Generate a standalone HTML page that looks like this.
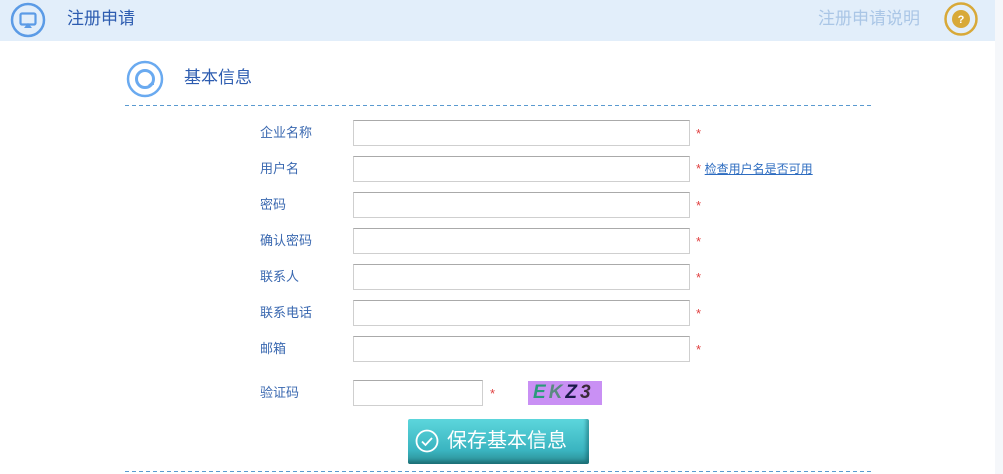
<!DOCTYPE html><html><head><meta charset="utf-8"><style>
body{margin:0;width:1003px;height:474px;background:#fff;font-family:"Liberation Sans","Noto Sans CJK SC",sans-serif;position:relative;overflow:hidden}
.a{position:absolute}
.hdr{left:0;top:0;width:995px;height:41px;background:#e2eefa}
.side{left:995px;top:0;width:8px;height:474px;background:#f5f7fa}
.lbl{left:260px;font-size:13px;color:#3a68b0;line-height:16px}
.in{left:353px;width:335px;height:24px;border:1px solid #cfcfcf;border-top-color:#aaa;background:#fff}
.st{color:#e04040;font-size:13px;line-height:16px}
.dash{left:125px;width:747px;height:1px;background:repeating-linear-gradient(90deg,#5a9ad0 0 4px,transparent 4px 7px)}
</style></head><body>
<div class="a hdr"></div><div class="a side"></div>
<svg class="a" style="left:10px;top:2px" width="36" height="36" viewBox="0 0 36 36"><circle cx="18" cy="18" r="16" fill="none" stroke="#5b9be6" stroke-width="2.5"/><rect x="10.5" y="11.5" width="15" height="11" rx="1.5" fill="none" stroke="#5b9be6" stroke-width="2.2"/><path d="M14 26h8l-4-5z" fill="#5b9be6"/></svg>
<div class="a" style="left:67px;top:8px;font-size:17px;line-height:22px;color:#2d5cb0">注册申请</div>
<div class="a" style="left:818px;top:8px;font-size:17px;line-height:22px;color:#aac6e6">注册申请说明</div>
<svg class="a" style="left:943px;top:1px" width="36" height="36" viewBox="0 0 36 36"><circle cx="18" cy="18" r="15.5" fill="none" stroke="#d8a938" stroke-width="2.5"/><circle cx="18" cy="18" r="9" fill="#d8a938"/><text x="18" y="22" text-anchor="middle" font-size="11" font-weight="bold" fill="#fff" font-family="Liberation Sans">?</text></svg>
<svg class="a" style="left:126px;top:60px" width="38" height="38" viewBox="0 0 38 38"><circle cx="19" cy="19" r="17" fill="none" stroke="#6aaaf0" stroke-width="2.5"/><circle cx="19" cy="19" r="8.5" fill="none" stroke="#6aaaf0" stroke-width="3"/><path d="M22 25h6v-5z" fill="#6aaaf0"/></svg>
<div class="a" style="left:184px;top:67px;font-size:17px;line-height:22px;color:#2d5cb0">基本信息</div>
<div class="a dash" style="top:105px"></div>
<div class="a dash" style="top:471px"></div>
<div class="a lbl" style="top:125px">企业名称</div><div class="a in" style="top:120px"></div><div class="a st" style="left:696px;top:126px">*</div>
<div class="a lbl" style="top:161px">用户名</div><div class="a in" style="top:156px"></div><div class="a st" style="left:696px;top:161px">* <span style="color:#2d6cc0;text-decoration:underline;font-size:12px">检查用户名是否可用</span></div>
<div class="a lbl" style="top:197px">密码</div><div class="a in" style="top:192px"></div><div class="a st" style="left:696px;top:198px">*</div>
<div class="a lbl" style="top:233px">确认密码</div><div class="a in" style="top:228px"></div><div class="a st" style="left:696px;top:234px">*</div>
<div class="a lbl" style="top:269px">联系人</div><div class="a in" style="top:264px"></div><div class="a st" style="left:696px;top:270px">*</div>
<div class="a lbl" style="top:305px">联系电话</div><div class="a in" style="top:300px"></div><div class="a st" style="left:696px;top:306px">*</div>
<div class="a lbl" style="top:341px">邮箱</div><div class="a in" style="top:336px"></div><div class="a st" style="left:696px;top:342px">*</div>
<div class="a lbl" style="top:385px">验证码</div><div class="a in" style="top:380px;width:128px"></div><div class="a st" style="left:490px;top:386px">*</div>
<div class="a" style="left:528px;top:381px;width:74px;height:24px;background:#c990f4;font:italic bold 19px 'Liberation Sans';line-height:24px;letter-spacing:3px;padding-left:5px;box-sizing:border-box"><span style="color:#2a9a7a">E</span><span style="color:#5a8a80">K</span><span style="color:#1a1a4a">Z</span><span style="color:#3a2a3a">3</span></div>
<div class="a" style="left:408px;top:419px;width:181px;height:45px;background:linear-gradient(#5cd6dc,#3ab4c0 70%,#2a8a90);border-radius:2px;box-shadow:inset -3px -3px 3px rgba(0,60,70,.35)"></div>
<svg class="a" style="left:415px;top:429px" width="24" height="24" viewBox="0 0 24 24"><circle cx="12" cy="12" r="10.5" fill="none" stroke="#fff" stroke-width="1.8"/><path d="M7 12.5l3.5 3.5 6.5-7" fill="none" stroke="#fff" stroke-width="1.8"/></svg>
<div class="a" style="left:447px;top:428px;font-size:20px;line-height:26px;color:#fff">保存基本信息</div>
</body></html>
